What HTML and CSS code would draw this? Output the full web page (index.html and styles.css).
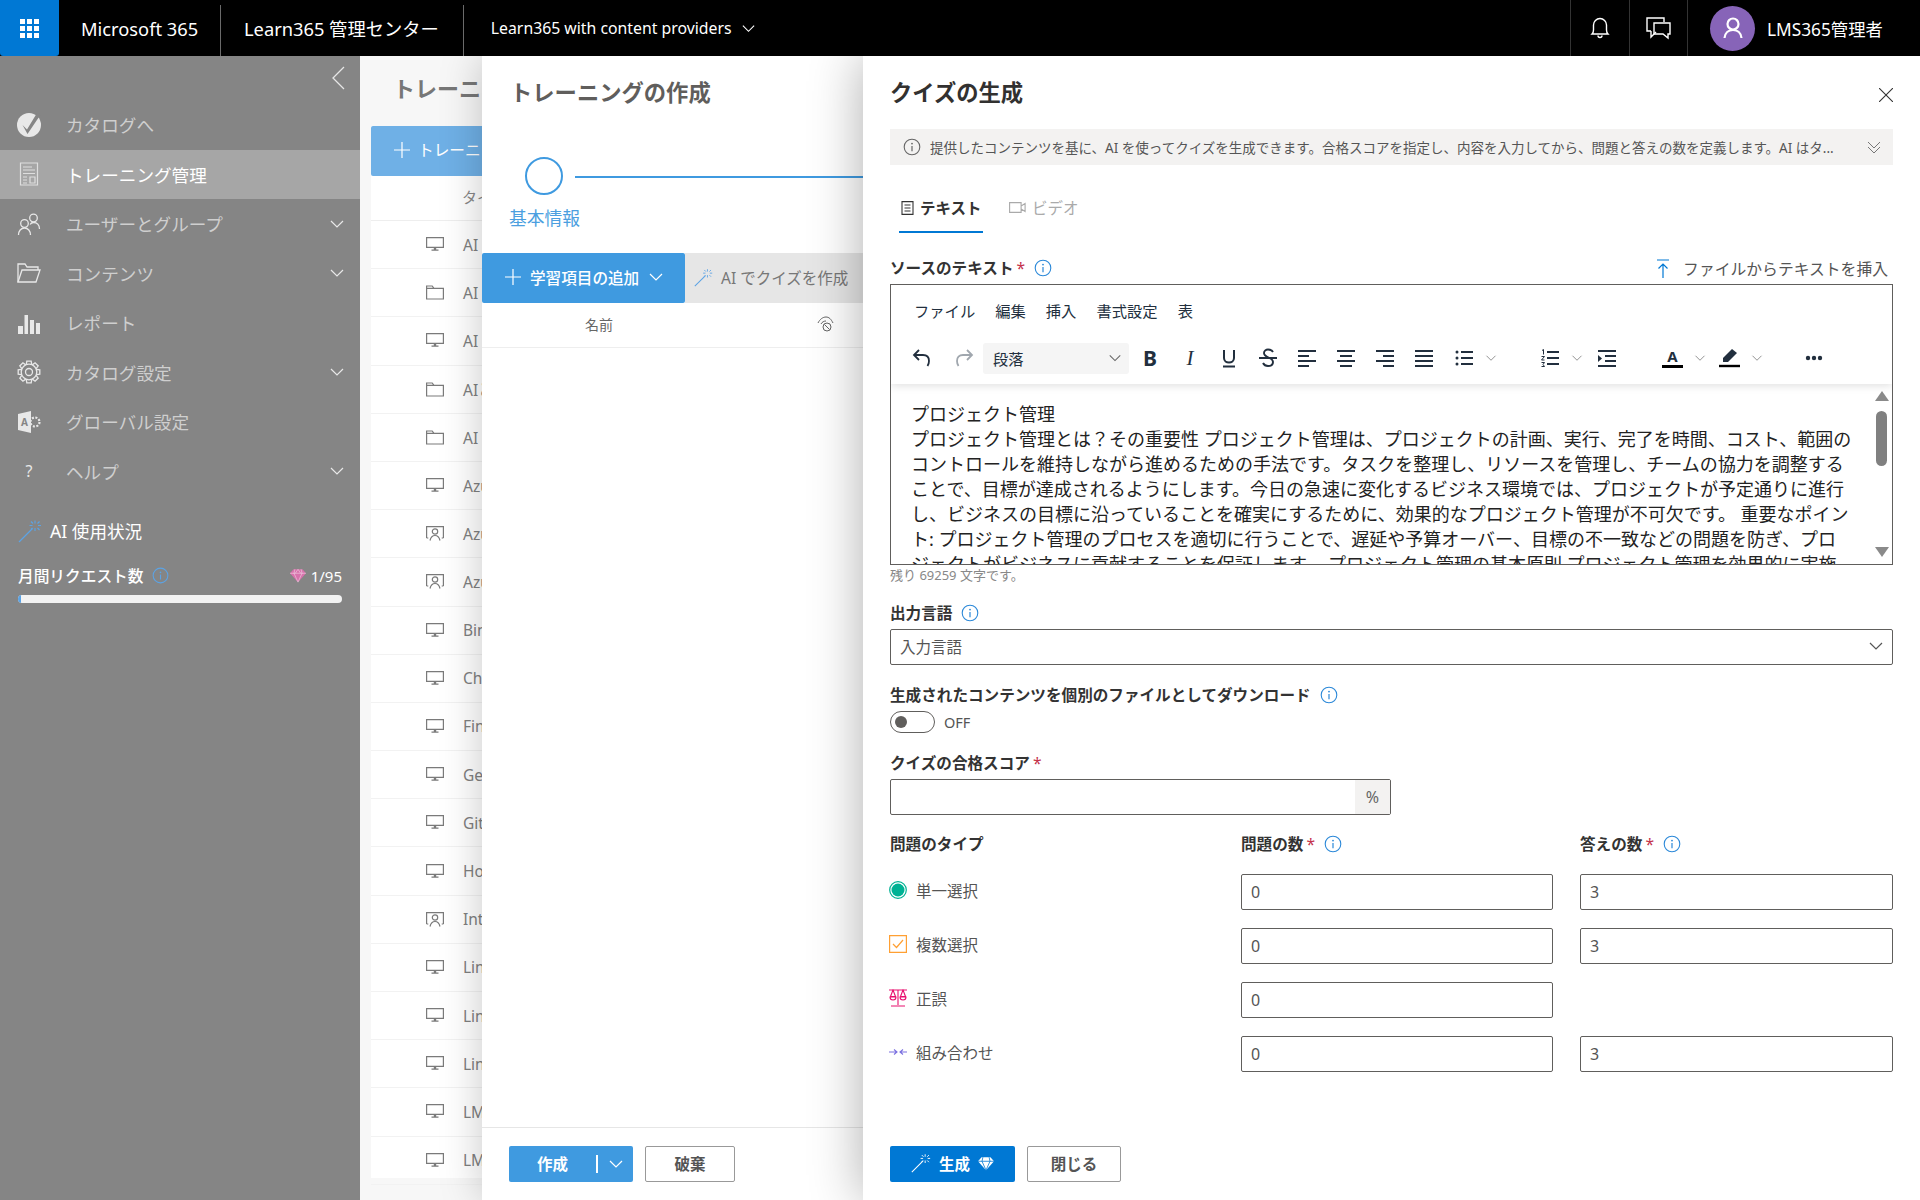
FILE: index.html

```html
<!DOCTYPE html>
<html lang="ja">
<head>
  <meta charset="UTF-8">
  <title>Learn365 管理センター</title>
  <link rel="stylesheet" href="styles.css">
</head>
<body>
  <svg class="sprite" xmlns="http://www.w3.org/2000/svg">
    <symbol id="i-chev" viewBox="0 0 16 16"><path d="M2 5l6 6 6-6" fill="none" stroke="currentColor" stroke-width="1.2"/></symbol>
    <symbol id="i-info" viewBox="0 0 18 18"><circle cx="9" cy="9" r="7.8" fill="none" stroke="currentColor" stroke-width="1.1"/><path d="M9 8v5.2" stroke="currentColor" stroke-width="1.2"/><circle cx="9" cy="5.6" r=".9" fill="currentColor"/></symbol>
    <symbol id="i-wand" viewBox="0 0 24 24"><path d="M1 23L14.500 9.500" stroke="currentColor" stroke-width="1.300" fill="none"/><path d="M17 1.500v3M17 9v3M11.500 6.500h3M20 6.500h3M13 2.500l2 2M19.500 9l2 2M21.500 2.500l-2 2M13 10.500l1.500-1.500" stroke="currentColor" stroke-width="1.100" fill="none"/></symbol>
    <symbol id="i-gem" viewBox="0 0 18 16"><path d="M4 1h10l4 4.500L9 15.500 0 5.500z" fill="currentColor"/><path d="M0 5.500h18M5.500 1L4.500 5.500 9 15.500l4.500-10L12.500 1M9 1L6 5.500M9 1l3 4.500" stroke="#fff" stroke-opacity=".55" stroke-width=".8" fill="none"/></symbol>
    <symbol id="i-gem-white" viewBox="0 0 18 16"><path d="M4 1h10l4 4.500L9 15.500 0 5.500z" fill="#fff"/><path d="M0 5.500h18M5.500 1L4.500 5.500 9 15.500l4.500-10L12.500 1" stroke="#0078d4" stroke-width=".9" fill="none"/></symbol>
    <symbol id="i-screen" viewBox="0 0 18 15"><path d="M.6.600h16.800v9.800H.6z" fill="none" stroke="currentColor" stroke-width="1.200"/><path d="M5.500 12.500h7v1.200h-7zM7.800 10.500h2.400v2.200H7.800z" fill="currentColor"/></symbol>
    <symbol id="i-folder" viewBox="0 0 18 15"><path d="M.6 14V1h5.600l1.800 2.400h9.400V14zM.6 3.400h7.400" fill="none" stroke="currentColor" stroke-width="1.200"/></symbol>
    <symbol id="i-person" viewBox="0 0 18 15"><path d="M3 .6H.6v11.500M15 .6h2.400v11.500M3 .6h12M.6 12h1.700M15.700 12h1.700" fill="none" stroke="currentColor" stroke-width="1.200"/><circle cx="9" cy="5.500" r="2.700" fill="none" stroke="currentColor" stroke-width="1.200"/><path d="M4 14.500c.8-3.300 2.800-5 5-5s4.200 1.700 5 5" fill="none" stroke="currentColor" stroke-width="1.200"/></symbol>
    <symbol id="i-gear" viewBox="0 0 24 24">
      <g fill="none" stroke="currentColor" stroke-width="1.300">
        <circle cx="12" cy="12" r="3.500"/>
        <circle cx="12" cy="12" r="7.800"/>
        <path d="M9.300 4.600L9.800 1.200h4.400l.5 3.400"/>
        <path d="M9.300 4.600L9.800 1.200h4.400l.5 3.400" transform="rotate(45 12 12)"/>
        <path d="M9.300 4.600L9.800 1.200h4.400l.5 3.400" transform="rotate(90 12 12)"/>
        <path d="M9.300 4.600L9.800 1.200h4.400l.5 3.400" transform="rotate(135 12 12)"/>
        <path d="M9.300 4.600L9.800 1.200h4.400l.5 3.400" transform="rotate(180 12 12)"/>
        <path d="M9.300 4.600L9.800 1.200h4.400l.5 3.400" transform="rotate(225 12 12)"/>
        <path d="M9.300 4.600L9.800 1.200h4.400l.5 3.400" transform="rotate(270 12 12)"/>
        <path d="M9.300 4.600L9.800 1.200h4.400l.5 3.400" transform="rotate(315 12 12)"/>
      </g>
    </symbol>
  </svg>

  <header class="topbar">
    <div class="waffle">
      <svg width="19" height="19" viewBox="0 0 19 19" fill="#fff"><path d="M0 0h5v5H0zM7 0h5v5H7zM14 0h5v5h-5zM0 7h5v5H0zM7 7h5v5H7zM14 7h5v5h-5zM0 14h5v5H0zM7 14h5v5H7zM14 14h5v5h-5z"/></svg>
    </div>
    <div class="brand brand-ms">Microsoft 365</div>
    <div class="brand brand-sep">Learn365 管理センター</div>
    <div class="brand brand-sep tenant">Learn365 with content providers
      <svg class="chev-sm" width="15" height="15"><use href="#i-chev"/></svg>
    </div>
    <div class="topbar-right">
      <div class="top-icon">
        <svg width="20" height="22" viewBox="0 0 20 22" fill="none" stroke="#fff" stroke-width="1.400"><path d="M2 17c1-1 1.500-2 1.500-4V8a6.500 6.500 0 0 1 13 0v5c0 2 .5 3 1.500 4z"/><path d="M8 18.500a2 2 0 0 0 4 0"/></svg>
      </div>
      <div class="top-icon">
        <svg width="25" height="23" viewBox="0 0 25 23" fill="none" stroke="#fff" stroke-width="1.400"><path d="M5 14H1V1h17v4"/><path d="M8 6h16v11h-2v4l-5-4H8z"/><path d="M5 14v6l5-5"/></svg>
      </div>
      <div class="user">
        <div class="avatar">
          <svg width="20" height="22" viewBox="0 0 20 22" fill="none" stroke="#fff" stroke-width="2.200"><circle cx="10" cy="7" r="5.500"/><path d="M1.500 21c.5-5 4-8 8.500-8s8 3 8.500 8"/></svg>
        </div>
        <span>LMS365管理者</span>
      </div>
    </div>
  </header>

  <div class="layout">
    <nav class="sidebar">
      <div class="collapse">
        <svg width="14" height="24" viewBox="0 0 14 24" fill="none" stroke="#e6e6e6" stroke-width="1.300"><path d="M13 1L2 12l11 11"/></svg>
      </div>
      <ul class="menu">
        <li class="menu-item">
          <svg class="menu-icon" width="24" height="24" viewBox="0 0 24 24"><circle cx="12" cy="12" r="12" fill="#e8e8e8"/><path d="M5.500 12l4.500 4.500L20 0l4 1-13.500 20z" fill="#858585"/></svg>
          <span>カタログへ</span>
        </li>
        <li class="menu-item active">
          <svg class="menu-icon" width="24" height="24" viewBox="0 0 24 24" fill="none" stroke="#dedede" stroke-width="1.200"><path d="M3.500 1h17v22h-17zM6 5h9M6 8h12M6 11.500h12M6 15h4M6 18h4M6 21h4M13 15h5v6h-5z"/></svg>
          <span>トレーニング管理</span>
        </li>
        <li class="menu-item">
          <svg class="menu-icon" width="24" height="24" viewBox="0 0 24 24" fill="none" stroke="#e8e8e8" stroke-width="1.300"><circle cx="16.500" cy="6" r="3.800"/><circle cx="7.500" cy="11.500" r="3.800"/><path d="M1.500 23c0-4 2.500-7 6-7s6 3 6 7M13 12.500c1-1.500 2-2 3.500-2 3.500 0 6 2.500 6 6.500"/></svg>
          <span>ユーザーとグループ</span>
          <svg class="menu-chev" width="16" height="16"><use href="#i-chev"/></svg>
        </li>
        <li class="menu-item">
          <svg class="menu-icon" width="24" height="24" viewBox="0 0 24 24" fill="none" stroke="#e8e8e8" stroke-width="1.300"><path d="M1 21V3h7l2 3h11v3"/><path d="M1 21l4-12h18l-4 12z"/></svg>
          <span>コンテンツ</span>
          <svg class="menu-chev" width="16" height="16"><use href="#i-chev"/></svg>
        </li>
        <li class="menu-item">
          <svg class="menu-icon" width="24" height="24" viewBox="0 0 24 24" fill="#e8e8e8"><path d="M1 15h5v8H1zM7.500 4h3.500v19H7.500zM13 9h4v14h-4zM19 12h4v11h-4z"/></svg>
          <span>レポート</span>
        </li>
        <li class="menu-item">
          <svg class="menu-icon" width="24" height="24" color="#e8e8e8"><use href="#i-gear"/></svg>
          <span>カタログ設定</span>
          <svg class="menu-chev" width="16" height="16"><use href="#i-chev"/></svg>
        </li>
        <li class="menu-item">
          <svg class="menu-icon" width="24" height="24" viewBox="0 0 24 24"><path d="M1 4l13-3v22L1 20z" fill="#e8e8e8"/><text x="4" y="16" font-size="10" font-weight="700" fill="#858585" font-family="Noto Sans">A</text><circle cx="18" cy="12" r="4.500" fill="none" stroke="#e8e8e8" stroke-width="2.200" stroke-dasharray="2 1.500"/></svg>
          <span>グローバル設定</span>
        </li>
        <li class="menu-item">
          <span class="menu-icon help">?</span>
          <span>ヘルプ</span>
          <svg class="menu-chev" width="16" height="16"><use href="#i-chev"/></svg>
        </li>
      </ul>
      <div class="usage">
        <div class="usage-title">
          <svg width="24" height="24" color="#5ca3e4"><use href="#i-wand"/></svg>
          <span>AI 使用状況</span>
        </div>
        <div class="usage-row">
          <span class="usage-label">月間リクエスト数</span>
          <svg width="17" height="17" color="#5ca3e4"><use href="#i-info"/></svg>
          <svg class="usage-gem" width="16" height="15" color="#d873ad"><use href="#i-gem"/></svg>
          <span class="usage-count">1/95</span>
        </div>
        <div class="usage-bar"><div class="usage-fill" style="width: 1%"></div></div>
      </div>
    </nav>

    <main class="page">
      <h1 class="page-title">トレーニング</h1>
      <div class="page-table">
        <button class="page-add">
          <svg width="16" height="16" viewBox="0 0 16 16" stroke="#fff" stroke-width="1.200"><path d="M8 0v16M0 8h16"/></svg>
          トレーニング
        </button>
        <div class="list-head">タイトル</div>
        <div class="list-row"><svg width="18" height="15"><use href="#i-screen"/></svg><span>AI 入門</span></div>
        <div class="list-row"><svg width="18" height="15"><use href="#i-folder"/></svg><span>AI 基礎</span></div>
        <div class="list-row"><svg width="18" height="15"><use href="#i-screen"/></svg><span>AI 活用</span></div>
        <div class="list-row"><svg width="18" height="15"><use href="#i-folder"/></svg><span>AIと機械</span></div>
        <div class="list-row"><svg width="18" height="15"><use href="#i-folder"/></svg><span>AI 研修</span></div>
        <div class="list-row"><svg width="18" height="15"><use href="#i-screen"/></svg><span>Azure</span></div>
        <div class="list-row"><svg width="18" height="15"><use href="#i-person"/></svg><span>Azure</span></div>
        <div class="list-row"><svg width="18" height="15"><use href="#i-person"/></svg><span>Azure</span></div>
        <div class="list-row"><svg width="18" height="15"><use href="#i-screen"/></svg><span>Bing</span></div>
        <div class="list-row"><svg width="18" height="15"><use href="#i-screen"/></svg><span>Chat</span></div>
        <div class="list-row"><svg width="18" height="15"><use href="#i-screen"/></svg><span>Finance</span></div>
        <div class="list-row"><svg width="18" height="15"><use href="#i-screen"/></svg><span>Generative</span></div>
        <div class="list-row"><svg width="18" height="15"><use href="#i-screen"/></svg><span>GitHub</span></div>
        <div class="list-row"><svg width="18" height="15"><use href="#i-screen"/></svg><span>How</span></div>
        <div class="list-row"><svg width="18" height="15"><use href="#i-person"/></svg><span>Intro</span></div>
        <div class="list-row"><svg width="18" height="15"><use href="#i-screen"/></svg><span>LinkedIn</span></div>
        <div class="list-row"><svg width="18" height="15"><use href="#i-screen"/></svg><span>LinkedIn</span></div>
        <div class="list-row"><svg width="18" height="15"><use href="#i-screen"/></svg><span>LinkedIn</span></div>
        <div class="list-row"><svg width="18" height="15"><use href="#i-screen"/></svg><span>LMS365</span></div>
        <div class="list-row"><svg width="18" height="15"><use href="#i-screen"/></svg><span>LMS365</span></div>
      </div>
    </main>

    <section class="panel-create">
      <h2 class="create-title">トレーニングの作成</h2>
      <div class="stepper">
        <div class="step-circle"></div>
        <div class="step-line"></div>
      </div>
      <div class="step-label">基本情報</div>
      <div class="create-actions">
        <button class="btn-add">
          <svg width="16" height="16" viewBox="0 0 16 16" stroke="#fff" stroke-width="1.200"><path d="M8 0v16M0 8h16"/></svg>
          学習項目の追加
          <svg width="16" height="16"><use href="#i-chev"/></svg>
        </button>
        <div class="ai-quiz">
          <svg width="19" height="19" color="#5ca3e4"><use href="#i-wand"/></svg>
          AI でクイズを作成
        </div>
      </div>
      <div class="create-head">
        <span>名前</span>
        <svg width="17" height="16" viewBox="0 0 17 16" fill="none" stroke="#666" stroke-width="1"><path d="M1 7c2-4 5-6 8-6s5 2 7 6"/><path d="M4 8c1-2 3-3 5-3"/><circle cx="10" cy="11" r="4"/><path d="M7.500 8.500l5 5"/></svg>
      </div>
      <div class="create-foot">
        <button class="btn-create">
          <span class="btn-create-text">作成</span>
          <span class="btn-create-arrow"><svg width="16" height="16"><use href="#i-chev"/></svg></span>
        </button>
        <button class="btn-plain btn-discard">破棄</button>
      </div>
    </section>

    <section class="panel-quiz">
      <button class="close" aria-label="閉じる">
        <svg width="14" height="14" viewBox="0 0 14 14" stroke="#333" stroke-width="1.100"><path d="M0 0l14 14M14 0L0 14"/></svg>
      </button>
      <h2 class="quiz-title">クイズの生成</h2>
      <div class="notice">
        <svg width="18" height="18" color="#666"><use href="#i-info"/></svg>
        <span class="notice-text">提供したコンテンツを基に、AI を使ってクイズを生成できます。合格スコアを指定し、内容を入力してから、問題と答えの数を定義します。AI はタ...</span>
        <svg class="notice-more" width="14" height="14" viewBox="0 0 14 14" fill="none" stroke="#777" stroke-width="1"><path d="M1 2l6 6 6-6M1 7l6 6 6-6"/></svg>
      </div>

      <div class="tabs">
        <div class="tab active">
          <svg width="13" height="14" viewBox="0 0 13 14" fill="none" stroke="#333" stroke-width="1.100"><path d="M1 .6h11v12.800H1zM3.500 4h6M3.500 7h6M3.500 10h6"/></svg>
          テキスト
        </div>
        <div class="tab">
          <svg width="17" height="11" viewBox="0 0 17 11" fill="none" stroke="#aaa" stroke-width="1.100"><path d="M.6.6h11.500v9.800H.6zM12.100 4l4-2.500v8l-4-2.500"/></svg>
          ビデオ
        </div>
      </div>

      <div class="label-row source-label">
        <label class="field-label">ソースのテキスト<em>*</em></label>
        <svg class="info" width="18" height="18"><use href="#i-info"/></svg>
        <div class="insert-file">
          <svg width="12" height="19" viewBox="0 0 12 19" fill="none" stroke="#0078d4" stroke-width="1.200"><path d="M0 1h12M6 19V5M1.500 9.500L6 5l4.500 4.500"/></svg>
          ファイルからテキストを挿入
        </div>
      </div>

      <div class="editor">
        <div class="editor-head">
          <div class="editor-menu">
            <span>ファイル</span><span>編集</span><span>挿入</span><span>書式設定</span><span>表</span>
          </div>
          <div class="editor-tools">
            <svg class="tool t-undo" width="20" height="20" viewBox="0 0 20 20" fill="none" stroke="#222f3e" stroke-width="1.800"><path d="M7 2L2 7l5 5"/><path d="M2 7h9c4 0 6 2.500 6 6 0 2-.5 3.500-1.500 5"/></svg>
            <svg class="tool t-redo" width="20" height="20" viewBox="0 0 20 20" fill="none" stroke="#a0a7ae" stroke-width="1.800"><path d="M13 2l5 5-5 5"/><path d="M18 7H9c-4 0-6 2.500-6 6 0 2 .5 3.500 1.500 5"/></svg>
            <div class="format-select">段落<svg width="14" height="14" color="#666"><use href="#i-chev"/></svg></div>
            <span class="tool t-bold">B</span>
            <span class="tool t-italic">I</span>
            <svg class="tool t-w" width="18" height="20" viewBox="0 0 18 20" fill="none" stroke="#222f3e" stroke-width="2"><path d="M4 2v8c0 6 10 6 10 0V2M3 18.500h12"/></svg>
            <svg class="tool t-w" width="18" height="20" viewBox="0 0 18 20" fill="none" stroke="#222f3e" stroke-width="1.900"><path d="M14 4c-1-2-3-2.500-5-2.500S5 3 5 5c0 5 9 4 9 9 0 3-2.500 4-5 4s-4-1-5-3M0 10h18"/></svg>
            <svg class="tool t-w" width="18" height="20" viewBox="0 0 18 20" stroke="#222f3e" stroke-width="2"><path d="M0 3h18M0 8h11M0 13h18M0 18h11"/></svg>
            <svg class="tool t-w" width="18" height="20" viewBox="0 0 18 20" stroke="#222f3e" stroke-width="2"><path d="M0 3h18M3 8h12M0 13h18M3 18h12"/></svg>
            <svg class="tool t-w" width="18" height="20" viewBox="0 0 18 20" stroke="#222f3e" stroke-width="2"><path d="M0 3h18M7 8h11M0 13h18M7 18h11"/></svg>
            <svg class="tool t-w" width="18" height="20" viewBox="0 0 18 20" stroke="#222f3e" stroke-width="2"><path d="M0 3h18M0 8h18M0 13h18M0 18h18"/></svg>
            <svg class="tool t-bullets" width="18" height="20" viewBox="0 0 18 20"><g stroke="#222f3e" stroke-width="2"><path d="M6 4h12M6 10h12M6 16h12"/></g><g fill="#222f3e"><circle cx="2" cy="4" r="1.500"/><circle cx="2" cy="10" r="1.500"/><circle cx="2" cy="16" r="1.500"/></g></svg>
            <svg class="tool-chev t-c1" width="12" height="12" color="#888"><use href="#i-chev"/></svg>
            <svg class="tool t-num" width="18" height="20" viewBox="0 0 18 20"><g stroke="#222f3e" stroke-width="2"><path d="M6 4h12M6 10h12M6 16h12"/></g><g fill="none" stroke="#222f3e" stroke-width="1"><path d="M1 2.500l1.500-1v5M.5 8.500h3l-3 3.500h3M.5 14.500h3l-1.500 2 1.500 2h-3"/></g></svg>
            <svg class="tool-chev t-c2" width="12" height="12" color="#888"><use href="#i-chev"/></svg>
            <svg class="tool t-indent" width="18" height="20" viewBox="0 0 18 20"><g stroke="#222f3e" stroke-width="2"><path d="M0 3h18M7 8h11M7 13h11M0 18h18"/></g><path d="M0 7l4 3.500L0 14z" fill="#222f3e"/></svg>
            <span class="tool t-color"><b>A</b></span>
            <svg class="tool-chev t-c3" width="12" height="12" color="#888"><use href="#i-chev"/></svg>
            <svg class="tool t-pen" width="21" height="20" viewBox="0 0 21 20"><path d="M13 1l5 4-9 9H4v-4z" fill="#222f3e"/><path d="M0 18h21" stroke="#000" stroke-width="2.400"/></svg>
            <svg class="tool-chev t-c4" width="12" height="12" color="#888"><use href="#i-chev"/></svg>
            <svg class="tool t-dots" width="18" height="6" viewBox="0 0 18 6" fill="#222f3e"><circle cx="3" cy="3" r="2.200"/><circle cx="9" cy="3" r="2.200"/><circle cx="15" cy="3" r="2.200"/></svg>
          </div>
        </div>
        <div class="editor-body">
          <div class="editor-text">
            <p>プロジェクト管理</p>
            <p>プロジェクト管理とは？その重要性 プロジェクト管理は、プロジェクトの計画、実行、完了を時間、コスト、範囲の</p>
            <p>コントロールを維持しながら進めるための手法です。タスクを整理し、リソースを管理し、チームの協力を調整する</p>
            <p>ことで、目標が達成されるようにします。今日の急速に変化するビジネス環境では、プロジェクトが予定通りに進行</p>
            <p>し、ビジネスの目標に沿っていることを確実にするために、効果的なプロジェクト管理が不可欠です。 重要なポイン</p>
            <p>ト: プロジェクト管理のプロセスを適切に行うことで、遅延や予算オーバー、目標の不一致などの問題を防ぎ、プロ</p>
            <p>ジェクトがビジネスに貢献することを保証します。 プロジェクト管理の基本原則 プロジェクト管理を効果的に実施</p>
          </div>
          <div class="scrollbar">
            <div class="arrow-up"></div>
            <div class="thumb"></div>
            <div class="arrow-down"></div>
          </div>
        </div>
      </div>
      <div class="char-count">残り 69259 文字です。</div>

      <div class="label-row out-label">
        <label class="field-label">出力言語</label>
        <svg class="info" width="18" height="18"><use href="#i-info"/></svg>
      </div>
      <div class="select-box">入力言語<svg width="16" height="16" color="#555"><use href="#i-chev"/></svg></div>

      <div class="label-row dl-label">
        <label class="field-label">生成されたコンテンツを個別のファイルとしてダウンロード</label>
        <svg class="info" width="18" height="18"><use href="#i-info"/></svg>
      </div>
      <div class="toggle-row">
        <div class="toggle"><div class="knob"></div></div>
        <span>OFF</span>
      </div>

      <div class="label-row score-label">
        <label class="field-label">クイズの合格スコア<em>*</em></label>
      </div>
      <div class="score-box"><div class="score-input"></div><div class="score-unit">%</div></div>

      <div class="qgrid">
        <div class="label-row"><label class="field-label">問題のタイプ</label></div>
        <div class="label-row"><label class="field-label">問題の数<em>*</em></label><svg class="info" width="18" height="18"><use href="#i-info"/></svg></div>
        <div class="label-row"><label class="field-label">答えの数<em>*</em></label><svg class="info" width="18" height="18"><use href="#i-info"/></svg></div>

        <div class="qtype">
          <svg width="18" height="18" viewBox="0 0 18 18"><circle cx="9" cy="9" r="8.300" fill="none" stroke="#00b294" stroke-width="1.200"/><circle cx="9" cy="9" r="6.500" fill="#00b294"/></svg>
          単一選択
        </div>
        <div class="num-box">0</div>
        <div class="num-box">3</div>

        <div class="qtype">
          <svg width="18" height="18" viewBox="0 0 18 18" fill="none" stroke="#ffa033" stroke-width="1.200"><path d="M.6.600h16.800v16.800H.6zM4 9l3.500 3.500L14 5"/></svg>
          複数選択
        </div>
        <div class="num-box">0</div>
        <div class="num-box">3</div>

        <div class="qtype">
          <svg width="18" height="18" viewBox="0 0 18 18" fill="none" stroke="#e8106e" stroke-width="1.100"><path d="M0 1h18M9 1v15M2 17h14M4 1L1.500 7.500h5zM14 1l-2.500 6.500h5zM1 8a3 3 0 0 0 6 0zM11 8a3 3 0 0 0 6 0z"/></svg>
          正誤
        </div>
        <div class="num-box">0</div>
        <div></div>

        <div class="qtype">
          <svg width="18" height="18" viewBox="0 0 18 18" fill="none" stroke="#7a6fe0" stroke-width="1.100"><path d="M0 9h8M5 6.500L8 9l-3 2.500M18 9h-7M14 6.500L11 9l3 2.500"/></svg>
          組み合わせ
        </div>
        <div class="num-box">0</div>
        <div class="num-box">3</div>
      </div>

      <div class="quiz-foot">
        <button class="btn-generate">
          <svg width="20" height="20"><use href="#i-wand"/></svg>
          生成
          <svg width="16" height="15"><use href="#i-gem-white"/></svg>
        </button>
        <button class="btn-plain btn-close">閉じる</button>
      </div>
    </section>
  </div>
</body>
</html>
```

FILE: styles.css

```css
* {
  box-sizing: border-box;
}
html, body {
  height: 100%;
}
body {
  margin: 0;
  font-family: "Noto Sans", "Noto Sans CJK JP", sans-serif;
  color: #333;
  overflow: hidden;
  background: #f7f7f7;
}
h1, h2, p, ul {
  margin: 0;
  padding: 0;
}
button {
  font-family: inherit;
  cursor: pointer;
}
.sprite {
  display: none;
}

/* top bar */
.topbar {
  display: flex;
  align-items: stretch;
  height: 56px;
  background: #000;
  color: #fff;
  position: relative;
  z-index: 10;
}
.waffle {
  width: 59px;
  background: #0078d4;
  border-radius: 0 0 3px 3px;
  display: flex;
  align-items: center;
  justify-content: center;
}
.brand {
  display: flex;
  align-items: center;
  font-size: 18.300px;
  padding: 0 24px 5px 22px;
  margin-top: 5px;
  white-space: nowrap;
}
.brand-ms {
  width: 161px;
  padding-right: 0;
}
.brand-sep {
  border-left: 1px solid #6a6a6a;
  padding-left: 23px;
}
.tenant {
  font-size: 15.800px;
  padding-left: 27px;
}
.chev-sm {
  margin-left: 9px;
}
.topbar-right {
  margin-left: auto;
  display: flex;
  align-items: stretch;
}
.top-icon {
  width: 58.500px;
  display: flex;
  align-items: center;
  justify-content: center;
  border-left: 1px solid #333;
}
.user {
  width: 233px;
  display: flex;
  align-items: center;
  border-left: 1px solid #333;
  padding-left: 22px;
  font-size: 17.300px;
}
.avatar {
  width: 45px;
  height: 45px;
  border-radius: 50%;
  background: #8764b8;
  display: flex;
  align-items: center;
  justify-content: center;
  margin-right: 12px;
}

/* main layout */
.layout {
  display: flex;
  height: 1144px;
  position: relative;
}

/* sidebar */
.sidebar {
  width: 360px;
  flex-shrink: 0;
  background: #858585;
  color: #cfcfcf;
}
.collapse {
  height: 44px;
  display: flex;
  justify-content: flex-end;
  align-items: flex-end;
  padding: 0 15px 10px 0;
}
.menu {
  list-style: none;
}
.menu-item {
  display: flex;
  align-items: center;
  height: 49.500px;
  font-size: 17.600px;
  padding-left: 17px;
}
.menu-item.active {
  background: #a6a6a6;
  color: #fff;
}
.menu-icon {
  width: 24px;
  margin-right: 25px;
  flex-shrink: 0;
}
.help {
  text-align: center;
  font-size: 16px;
  color: #e8e8e8;
}
.menu-chev {
  margin-left: auto;
  margin-right: 15px;
  color: #e8e8e8;
}
.usage {
  padding: 22px 18px 0;
}
.usage-title {
  display: flex;
  align-items: center;
  gap: 8px;
  font-size: 17.600px;
  color: #fff;
}
.usage-row {
  display: flex;
  align-items: center;
  margin-top: 21px;
  font-size: 15.700px;
  font-weight: 500;
  color: #fff;
}
.usage-label {
  margin-right: 8px;
}
.usage-gem {
  margin-left: auto;
  margin-right: 5px;
}
.usage-count {
  font-weight: 400;
  font-size: 15px;
}
.usage-bar {
  height: 8px;
  margin-top: 8px;
  background: #f2f2f2;
  border-radius: 4px;
  overflow: hidden;
}
.usage-fill {
  height: 100%;
  background: #5ca3e4;
}

/* page behind the panels, only its left edge shows */
.page {
  flex: 0 0 122px;
  padding-left: 11px;
  background: #f7f7f7;
  overflow: hidden;
}
.page-title {
  font-size: 22px;
  font-weight: 700;
  color: #777;
  padding: 15px 0 0 22px;
  height: 70px;
  white-space: nowrap;
}
.page-table {
  background: #fff;
  height: 1052px;
  width: 200px;
}
.page-add {
  display: flex;
  align-items: center;
  gap: 8px;
  width: 100%;
  height: 50px;
  border: none;
  border-radius: 2px;
  background: #6fb0e6;
  color: #fff;
  font-size: 15.700px;
  padding: 0 0 3px 23px;
  white-space: nowrap;
}
.list-head {
  height: 45px;
  line-height: 42px;
  font-size: 15px;
  color: #888;
  padding-left: 91px;
  border-bottom: 1px solid #eee;
}
.list-row {
  display: flex;
  align-items: center;
  height: 48.200px;
  padding-left: 55px;
  border-bottom: 1px solid #f2f2f2;
  font-size: 15.500px;
  color: #808080;
  white-space: nowrap;
}
.list-row svg {
  color: #7a7a7a;
  margin-right: 19px;
  flex-shrink: 0;
}

/* training panel */
.panel-create {
  position: absolute;
  top: 0;
  left: 482px;
  width: 382px;
  height: 100%;
  background: #fff;
  box-shadow: 0 0 40px rgba(0, 0, 0, 0.22);
  display: flex;
  flex-direction: column;
}
.create-title {
  font-size: 22.300px;
  font-weight: 700;
  color: #605e5c;
  padding: 19px 0 0 28px;
  height: 73px;
  white-space: nowrap;
}
.stepper {
  display: flex;
  align-items: center;
  margin: 28px 0 0 43px;
}
.step-circle {
  width: 38px;
  height: 38px;
  border: 2px solid #3f9ae0;
  border-radius: 50%;
  flex-shrink: 0;
}
.step-line {
  flex: 1;
  height: 2px;
  margin: 2px 0 0 12px;
  background: #3f9ae0;
}
.step-label {
  margin: 10px 0 0 27px;
  font-size: 17.800px;
  line-height: 26px;
  color: #4c9fe0;
}
.create-actions {
  display: flex;
  height: 50px;
  margin-top: 22px;
}
.btn-add {
  width: 203px;
  border: none;
  border-radius: 2px;
  background: #3f9ae0;
  color: #fff;
  font-size: 15.600px;
  font-weight: 500;
  display: flex;
  align-items: center;
  padding: 0 0 2px 23px;
  gap: 9px;
}
.ai-quiz {
  flex: 1;
  background: #e6e6e6;
  color: #777;
  font-size: 15.500px;
  display: flex;
  align-items: center;
  padding: 0 0 2px 9px;
  gap: 8px;
  white-space: nowrap;
}
.create-head {
  display: flex;
  align-items: center;
  height: 45px;
  padding: 0 30px 3px 103px;
  justify-content: space-between;
  border-bottom: 1px solid #eee;
  font-size: 14px;
  color: #666;
}
.create-foot {
  margin-top: auto;
  height: 73px;
  border-top: 1px solid #e6e6e6;
  padding: 18px 0 0 27px;
  display: flex;
  gap: 12px;
  align-items: flex-start;
}
.btn-create {
  display: flex;
  width: 124px;
  height: 36px;
  padding: 0;
  border: none;
  border-radius: 2px;
  background: #3f9ae0;
  color: #fff;
  font-size: 15.500px;
  font-weight: 700;
  align-items: center;
}
.btn-create-text {
  width: 89px;
  text-align: center;
  border-right: 2px solid #fff;
  line-height: 18px;
}
.btn-create-arrow {
  flex: 1;
  display: flex;
  justify-content: center;
}
.btn-plain {
  height: 36px;
  padding: 0 0 2px;
  background: #fff;
  border: 1px solid #999;
  border-radius: 2px;
  font-size: 15.500px;
  font-weight: 700;
  color: #555;
}
.btn-discard {
  width: 90px;
}

/* quiz panel */
.panel-quiz {
  position: absolute;
  top: 0;
  right: 0;
  width: 1057px;
  height: 100%;
  padding: 0 27px;
  background: #fff;
  box-shadow: 0 0 50px rgba(0, 0, 0, 0.32);
}
.close {
  position: absolute;
  top: 32px;
  right: 27px;
  padding: 0;
  border: none;
  background: none;
  line-height: 0;
}
.quiz-title {
  font-size: 22.300px;
  font-weight: 700;
  color: #323130;
  padding-top: 19px;
  height: 73px;
}
.notice {
  display: flex;
  align-items: center;
  height: 36px;
  padding: 0 12px 0 13px;
  background: #f3f2f1;
  font-size: 13.500px;
  color: #555;
}
.notice-text {
  margin-left: 9px;
  white-space: nowrap;
}
.notice-more {
  margin-left: auto;
}
.tabs {
  display: flex;
  height: 44px;
  margin-top: 24px;
}
.tab {
  display: flex;
  align-items: center;
  gap: 6px;
  height: 44px;
  padding-bottom: 7px;
  font-size: 15.500px;
  color: #aaa;
  white-space: nowrap;
}
.tab svg {
  flex-shrink: 0;
}
.tab.active {
  width: 84px;
  margin: 0 26px 0 9px;
  padding: 0 0 5px 2px;
  color: #333;
  font-weight: 700;
  border-bottom: 2px solid #0078d4;
}
.label-row {
  display: flex;
  align-items: center;
  height: 20px;
}
.field-label {
  font-size: 15.600px;
  font-weight: 700;
  color: #333;
  white-space: nowrap;
  margin-top: -2px;
}
.field-label em {
  font-style: normal;
  font-weight: 400;
  color: #c4314b;
  margin-left: 3px;
}
.info {
  color: #2b88d8;
  margin-left: 9px;
  flex-shrink: 0;
}
.source-label {
  margin-top: 25px;
}
.insert-file {
  margin-left: auto;
  margin-right: 5px;
  display: flex;
  align-items: center;
  gap: 14px;
  font-size: 15.800px;
  color: #555;
}

/* editor */
.editor {
  height: 281px;
  margin-top: 6px;
  border: 1px solid #605e5c;
  overflow: hidden;
  display: flex;
  flex-direction: column;
}
.editor-head {
  height: 99px;
  flex-shrink: 0;
  box-shadow: 0 2px 8px rgba(0, 0, 0, 0.12);
  position: relative;
  z-index: 1;
  background: #fff;
}
.editor-menu {
  display: flex;
  height: 50px;
  align-items: center;
  gap: 20px;
  padding: 0 0 0 23px;
  font-size: 15.300px;
  color: #222f3e;
}
.editor-tools {
  display: flex;
  align-items: center;
  height: 42px;
  margin-top: 2px;
  padding-left: 21px;
}
.tool {
  flex-shrink: 0;
  display: block;
}
.t-redo {
  margin-left: 22px;
}
.format-select {
  display: flex;
  align-items: center;
  justify-content: space-between;
  width: 146px;
  height: 31px;
  margin-left: 9px;
  padding: 0 7px 0 10px;
  border-radius: 3px;
  background: #f5f5f5;
  font-size: 15.300px;
  color: #222f3e;
}
.t-bold, .t-italic {
  width: 18px;
  text-align: center;
  font-size: 21px;
  font-weight: 700;
  color: #222f3e;
}
.t-bold {
  margin-left: 12px;
}
.t-italic {
  margin-left: 22px;
  font-family: "Liberation Serif", serif;
  font-style: italic;
  font-weight: 400;
}
.t-w {
  margin-left: 21px;
}
.t-bullets {
  margin-left: 22px;
}
.tool-chev {
  flex-shrink: 0;
}
.t-c1 {
  margin-left: 12px;
}
.t-num {
  margin-left: 44px;
}
.t-c2 {
  margin-left: 12px;
}
.t-indent {
  margin-left: 15px;
}
.t-color {
  width: 21px;
  margin-left: 46px;
  text-align: center;
  font-size: 15px;
  color: #222f3e;
  border-bottom: 3px solid #000;
  line-height: 17px;
}
.t-c3 {
  margin-left: 11px;
}
.t-pen {
  margin-left: 13px;
}
.t-c4 {
  margin-left: 11px;
}
.t-dots {
  margin-left: 42px;
}
.editor-body {
  flex: 1;
  display: flex;
  min-height: 0;
}
.editor-text {
  flex: 1;
  padding: 18px 0 0 20px;
  overflow: hidden;
  font-size: 18px;
  line-height: 25px;
  color: #222;
  white-space: nowrap;
}
.scrollbar {
  width: 21px;
  display: flex;
  flex-direction: column;
  align-items: center;
  padding-top: 7px;
  background: #fff;
  flex-shrink: 0;
}
.arrow-up, .arrow-down {
  width: 0;
  height: 0;
  border-left: 7px solid transparent;
  border-right: 7px solid transparent;
}
.arrow-up {
  border-bottom: 10px solid #8a8a8a;
}
.arrow-down {
  margin-top: 81px;
  border-top: 10px solid #8a8a8a;
}
.thumb {
  width: 11px;
  height: 55px;
  margin-top: 10px;
  border-radius: 6px;
  background: #808080;
}
.char-count {
  height: 20px;
  line-height: 20px;
  font-size: 13px;
  color: #888;
}

/* form fields */
.out-label {
  margin-top: 18px;
}
.select-box {
  display: flex;
  align-items: center;
  justify-content: space-between;
  height: 36px;
  margin-top: 6px;
  padding: 0 8px 2px 9px;
  border: 1px solid #605e5c;
  border-radius: 2px;
  font-size: 15.500px;
  color: #555;
}
.dl-label {
  margin-top: 20px;
}
.toggle-row {
  display: flex;
  align-items: center;
  gap: 9px;
  margin-top: 6px;
  height: 22px;
  font-size: 14.500px;
  color: #555;
}
.toggle {
  width: 45px;
  height: 22px;
  padding: 4px;
  border: 1px solid #605e5c;
  border-radius: 11px;
}
.knob {
  width: 12px;
  height: 12px;
  border-radius: 50%;
  background: #605e5c;
}
.score-label {
  margin-top: 20px;
}
.score-box {
  display: flex;
  width: 501px;
  height: 36px;
  margin-top: 6px;
  border: 1px solid #605e5c;
  border-radius: 2px;
}
.score-input {
  flex: 1;
}
.score-unit {
  width: 35px;
  background: #f3f2f1;
  text-align: center;
  line-height: 34px;
  font-size: 16px;
  color: #666;
}
.qgrid {
  display: grid;
  grid-template-columns: 324px 312px 313px;
  grid-template-rows: 22px 36px 36px 36px 36px;
  column-gap: 27px;
  row-gap: 18px;
  margin-top: 19px;
}
.qtype {
  display: flex;
  align-items: center;
  gap: 9px;
  height: 36px;
  margin: -2px 0 0 -1px;
  font-size: 15.500px;
  color: #555;
}
.num-box {
  display: flex;
  align-items: center;
  height: 36px;
  padding-left: 9px;
  border: 1px solid #605e5c;
  border-radius: 2px;
  font-size: 16px;
  color: #555;
}
.quiz-foot {
  display: flex;
  gap: 12px;
  margin-top: 74px;
}
.btn-generate {
  display: flex;
  align-items: center;
  justify-content: center;
  gap: 8px;
  width: 125px;
  height: 36px;
  padding: 0 0 2px;
  border: none;
  border-radius: 2px;
  background: #0078d4;
  color: #fff;
  font-size: 15.500px;
  font-weight: 700;
}
.btn-close {
  width: 94px;
}
```
